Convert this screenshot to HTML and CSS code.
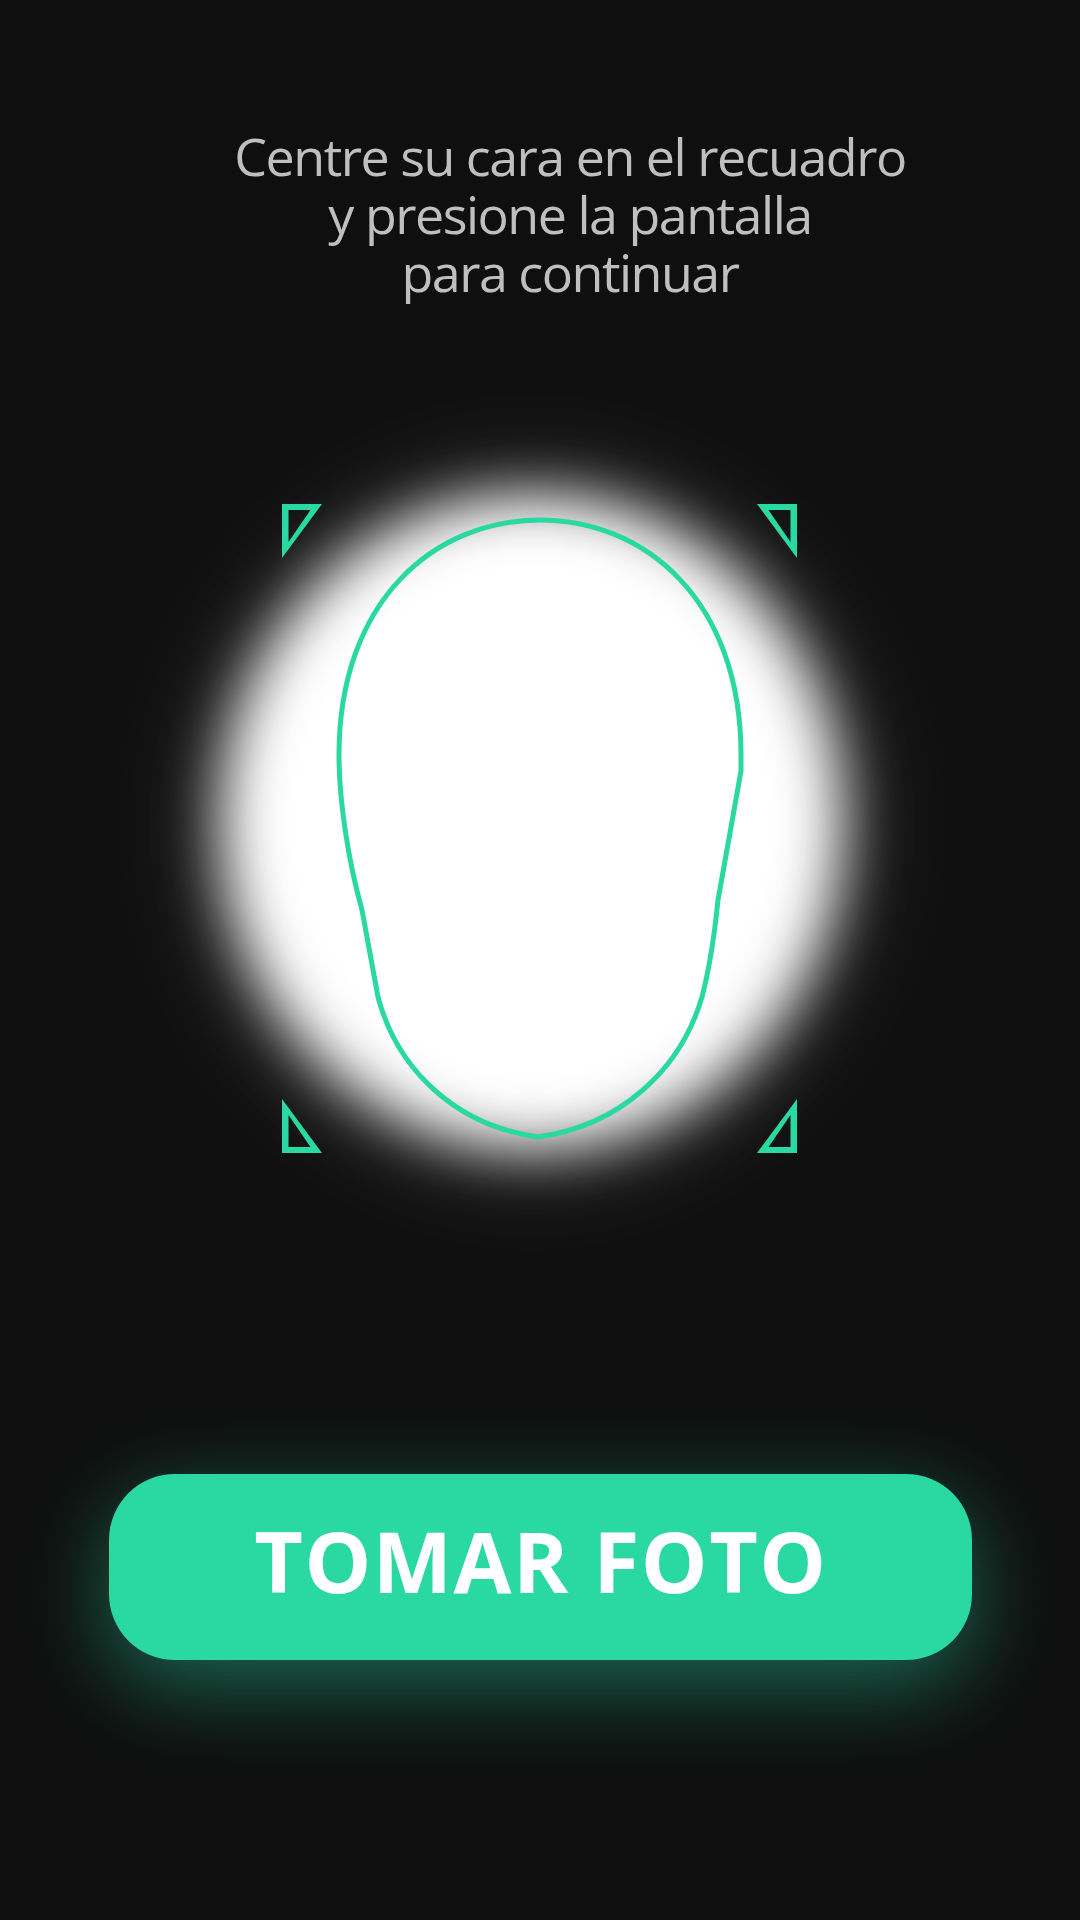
FILE: index.html
```html
<!DOCTYPE html>
<html lang="es">
<head>
<meta charset="utf-8">
<title>Tomar foto</title>
<link rel="stylesheet" href="styles.css">
</head>
<body>
<main class="screen">
  <p class="prompt">Centre su cara en el recuadro<br>y presione la pantalla<br>para continuar</p>
  <svg class="stage" width="1080" height="1000" viewBox="0 301 1080 1000" xmlns="http://www.w3.org/2000/svg" aria-hidden="true">
    <defs>
      <filter id="soft" x="-50%" y="-50%" width="200%" height="200%">
        <feGaussianBlur stdDeviation="30"/>
      </filter>
      <filter id="softer" x="-50%" y="-50%" width="200%" height="200%">
        <feGaussianBlur stdDeviation="45"/>
      </filter>
    </defs>
    <ellipse cx="532" cy="822" rx="370" ry="385" fill="#ffffff" opacity="0.05" filter="url(#softer)"/>
    <ellipse cx="532" cy="822" rx="312" ry="328" fill="#ffffff" filter="url(#soft)"/>
    <path class="face" d="M540,520 C435,520 339,600 339,755 C339,800 348,860 362,910 L378,997 C398,1072 458,1126 538,1137 C618,1126 680,1072 702,997 C709,970 715,930 718,900 L741,771 L741,755 C741,600 645,520 540,520 Z"/>
    <path class="corner" d="M282,504 H322 L282,558 Z M288.5,510 V542 L310.5,510 Z"/>
    <path class="corner" d="M797,504 H757 L797,558 Z M790.5,510 V542 L768.5,510 Z"/>
    <path class="corner" d="M282,1153 H322 L282,1099 Z M288.5,1147 V1115 L310.5,1147 Z"/>
    <path class="corner" d="M797,1153 H757 L797,1099 Z M790.5,1147 V1115 L768.5,1147 Z"/>
  </svg>
  <button class="shoot" type="button">TOMAR FOTO</button>
</main>
</body>
</html>
```

FILE: styles.css
```css
html, body {
  margin: 0;
  padding: 0;
  background: #0f0f0f;
}

.screen {
  width: 1080px;
  height: 1920px;
  display: flex;
  flex-direction: column;
  align-items: center;
  overflow: hidden;
}

.prompt {
  margin: 127px 0 0 0;
  padding-left: 60px;
  font-family: "Open Sans", "Noto Sans", sans-serif;
  font-size: 52px;
  line-height: 58px;
  letter-spacing: -1.5px;
  color: #bfbfbf;
  text-align: center;
}

.stage {
  display: block;
  flex: none;
}

.face {
  fill: none;
  stroke: #2ad8a1;
  stroke-width: 5;
  stroke-linejoin: round;
}

.corner {
  fill: #2ad8a1;
  fill-rule: evenodd;
}

.shoot {
  margin-top: 173px;
  width: 863px;
  height: 186px;
  border: none;
  border-radius: 66px;
  background: #2ad8a1;
  color: #ffffff;
  font-family: "Open Sans", "Noto Sans", sans-serif;
  font-weight: 700;
  font-size: 84px;
  line-height: 1;
  letter-spacing: 1.5px;
  padding: 0 0 13px 2px;
  display: flex;
  align-items: center;
  justify-content: center;
  box-shadow: 0 25px 90px rgba(42, 216, 161, 0.45);
}
```
